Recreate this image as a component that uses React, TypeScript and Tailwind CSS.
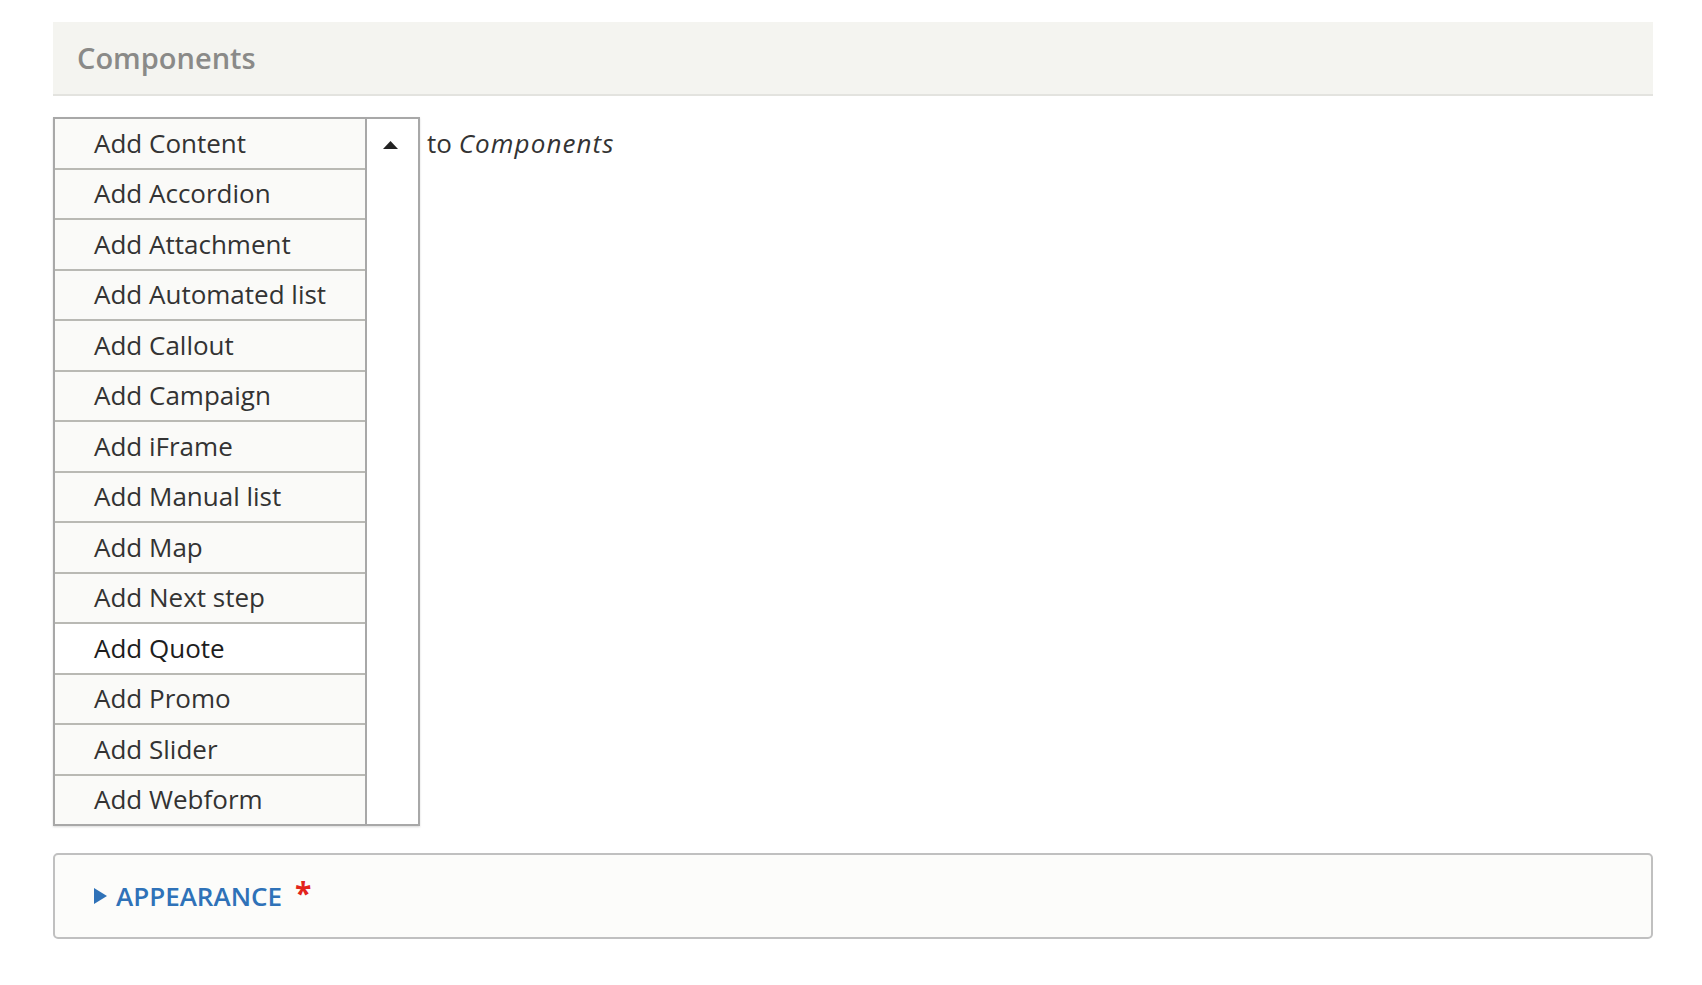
const items = [
  "Add Content",
  "Add Accordion",
  "Add Attachment",
  "Add Automated list",
  "Add Callout",
  "Add Campaign",
  "Add iFrame",
  "Add Manual list",
  "Add Map",
  "Add Next step",
  "Add Quote",
  "Add Promo",
  "Add Slider",
  "Add Webform",
];

export default function App() {
  return (
    <div className="min-h-screen bg-white pt-[22px] font-['Open_Sans',sans-serif]">
      <div className="ml-[53px] w-[1600px]">
        <div className="flex h-[74px] items-center border-b-2 border-[#e3e3df] bg-[#f4f4f0] pl-[24px]">
          <span className="text-[29px] font-semibold text-[#8a8a88]">Components</span>
        </div>

        <div className="mt-[21px] flex items-start">
          <div className="flex border-2 border-[#a8a8a8] shadow-[0_1px_2px_rgba(0,0,0,0.15)]">
            <ul className="w-[312px] border-r-2 border-[#a8a8a8]">
              {items.map((item, idx) => (
                <li
                  key={item}
                  className={`flex items-center pl-[39px] text-[26px] ${
                    idx === items.length - 1 ? "h-[48.5px]" : "h-[50.5px] border-b-2 border-[#b9b9b4]"
                  } ${item === "Add Quote" ? "bg-white text-[#1d1d1d]" : "bg-[#fafaf8] text-[#333]"}`}
                >
                  {item}
                </li>
              ))}
            </ul>
            <div className="flex w-[51px] justify-center bg-white pt-[22px]">
              <svg width="15" height="8" viewBox="0 0 15 8" className="ml-[-4px]">
                <path d="M7.5 0 L15 8 L0 8 Z" fill="#222" />
              </svg>
            </div>
          </div>
          <div className="ml-[7px] flex h-[52px] items-center text-[26px] text-[#333]">
            to&nbsp;<em className="tracking-[1.1px]">Components</em>
          </div>
        </div>

        <div className="mt-[27px] flex h-[86px] items-center rounded-[5px] border-2 border-[#c0c0c0] bg-[#fcfcfa] pl-[38px]">
          <svg width="15" height="16" viewBox="0 0 15 16">
            <path d="M1 0 L14 8 L1 16 Z" fill="#2f72b8" />
          </svg>
          <span className="ml-[8px] text-[26px] font-semibold text-[#2f72b8]">APPEARANCE</span>
          <span className="ml-[13px] -mt-[6px] text-[30px] font-bold leading-none text-[#e3241b]">*</span>
        </div>
      </div>
    </div>
  );
}
